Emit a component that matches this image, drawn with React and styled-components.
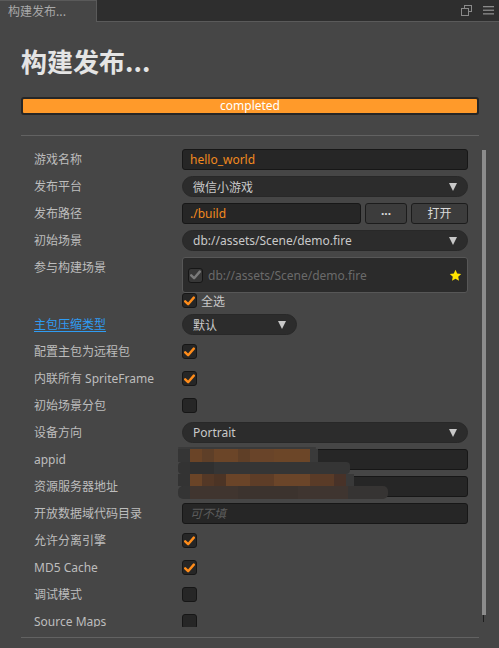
import React from "react";
import styled, { createGlobalStyle } from "styled-components";

const Global = createGlobalStyle`
  html, body { margin: 0; padding: 0; background: #464646; }
  body { font-family: "Noto Sans", "Noto Sans CJK SC", sans-serif; }
  * { box-sizing: border-box; }
`;

const Frame = styled.div`
  width: 499px;
  height: 648px;
  overflow: hidden;
  background: #464646;
  display: flex;
  flex-direction: column;
`;

const TabBar = styled.div`
  height: 22px;
  flex: none;
  display: flex;
  align-items: stretch;
  background: #2e2e2e;
`;

const Tab = styled.div`
  width: 97px;
  background: #464646;
  border-top: 1px solid #5a5a5a;
  border-right: 1px solid #5a5a5a;
  color: #a9a9a9;
  font-size: 12px;
  line-height: 20px;
  padding-left: 8px;
  font-family: "Noto Sans CJK SC", sans-serif;
`;

const TabFill = styled.div`
  flex: 1;
  border-bottom: 1px solid #5a5a5a;
  display: flex;
  justify-content: flex-end;
  align-items: center;
  gap: 11px;
  padding-right: 5px;
  padding-bottom: 1px;
`;

const Panel = styled.div`
  flex: 1;
  padding: 0 20px 0 21px;
  display: flex;
  flex-direction: column;
`;

const Title = styled.h1`
  margin: 22px 0 0;
  font-size: 26px;
  line-height: 34px;
  font-weight: 700;
  color: #e4e4e4;
  font-family: "Noto Sans CJK SC", sans-serif;
  letter-spacing: 0;
`;

const Progress = styled.div`
  margin-top: 19px;
  height: 18px;
  border: 2px solid #262626;
  border-radius: 3px;
  background: #ff9a2a;
  color: #ffffff;
  font-size: 12px;
  line-height: 13px;
  text-align: center;
`;

const Divider = styled.div`
  height: 1px;
  background: #626262;
  margin-top: ${(p) => p.$top}px;
`;

const ScrollRegion = styled.div`
  margin-top: 9px;
  height: 482px;
  margin-right: -7px;
  display: flex;
  overflow: hidden;
`;

const Form = styled.div`
  position: relative;
  flex: 1;
  padding: 4px 11px 0 13px;
  display: flex;
  flex-direction: column;
`;

const Track = styled.div`
  width: 4px;
  margin-left: 3px;
  padding-top: 5px;
  display: flex;
  flex-direction: column;
`;

const Thumb = styled.div`
  height: 465px;
  background: #8c8c8c;
`;

const ThumbEnd = styled.div`
  height: 7px;
  width: 1px;
  margin-left: 1px;
  background: #1e1e1e;
`;

const Row = styled.div`
  display: flex;
  align-items: flex-start;
  margin-bottom: ${(p) => (p.$gap !== undefined ? p.$gap : 6)}px;
`;

const Label = styled.div`
  width: 148px;
  flex: none;
  font-size: 12px;
  line-height: 21px;
  color: ${(p) => (p.$link ? "#2f9cf3" : "#bdbdbd")};
  text-decoration: ${(p) => (p.$link ? "underline" : "none")};
  text-underline-offset: 2px;
  white-space: nowrap;
`;

const Control = styled.div`
  flex: 1;
  display: flex;
  align-items: center;
  gap: 4px;
  min-height: 21px;
`;

const Input = styled.div`
  height: 21px;
  width: ${(p) => (p.$w ? `${p.$w}px` : "100%")};
  flex: ${(p) => (p.$w ? "none" : "1")};
  background: #262626;
  border: 1px solid #171717;
  border-radius: 3px;
  padding: 0 7px;
  font-size: 12px;
  line-height: 19px;
  color: #f28a20;
  font-style: ${(p) => (p.$placeholder ? "italic" : "normal")};
  ${(p) => p.$placeholder && "color: #5c5c5c;"}
`;

const Select = styled.div`
  height: 21px;
  width: ${(p) => (p.$w ? `${p.$w}px` : "100%")};
  background: #2c2c2c;
  border: 1px solid #282828;
  border-radius: 11px;
  padding: 0 10px 0 10px;
  display: flex;
  align-items: center;
  justify-content: space-between;
  font-size: 12px;
  color: #c9c9c9;
`;

const Arrow = styled.span`
  width: 0;
  height: 0;
  border-left: 4.5px solid transparent;
  border-right: 4.5px solid transparent;
  border-top: 8px solid #c8c8c8;
  margin-top: 1px;
`;

const Button = styled.div`
  height: 21px;
  width: ${(p) => p.$w}px;
  flex: none;
  background: #3c3c3c;
  border: 1px solid #1c1c1c;
  border-radius: 3px;
  color: #dadada;
  font-size: 12px;
  line-height: 19px;
  text-align: center;
  font-weight: ${(p) => (p.$bold ? 700 : 400)};
`;

const SceneBox = styled.div`
  flex: 1;
  height: 36px;
  background: #2b2b2b;
  border: 1px solid #575757;
  border-radius: 3px;
  display: flex;
  align-items: center;
  padding: 0 5px 0 5px;
  gap: 5px;
`;

const SceneText = styled.span`
  flex: 1;
  font-size: 12px;
  color: #6a6a6a;
`;

const Box = styled.div`
  width: 15px;
  height: 15px;
  flex: none;
  border-radius: 3px;
  background: ${(p) => (p.$disabled ? "#373737" : "#262626")};
  border: 1px solid #161616;
  display: flex;
  align-items: center;
  justify-content: center;
  margin-top: ${(p) => (p.$flat ? 0 : 3)}px;
  margin-bottom: ${(p) => (p.$flat ? 0 : 3)}px;
`;

const SelectAll = styled.div`
  display: flex;
  align-items: center;
  gap: 4px;
  padding-left: 148px;
  height: 15px;
  margin-bottom: 6px;
  font-size: 12px;
  color: #c9c9c9;
`;

const Mosaic = styled.div`
  position: absolute;
  left: 157px;
  top: 302px;
  width: 212px;
  height: 55px;
  pointer-events: none;
  filter: blur(0.4px);
`;

const Strip = styled.div`
  height: ${(p) => p.$h}px;
  width: ${(p) => p.$w}px;
  border-radius: ${(p) => p.$r || 0}px;
  background: ${(p) => p.$bg};
`;

function Check({ color = "#ff8c1a" }) {
  return (
    <svg width="11" height="10" viewBox="0 0 11 10">
      <path d="M1.2 5.3 L4.1 8.2 L9.8 1.6" fill="none" stroke={color} strokeWidth="2.4" strokeLinecap="round" strokeLinejoin="round" />
    </svg>
  );
}

function CheckBox({ on, disabled, flat }) {
  return (
    <Box $disabled={disabled} $flat={flat}>
      {on && <Check color={disabled ? "#7a7a7a" : "#ff8c1a"} />}
    </Box>
  );
}

function Star() {
  return (
    <svg width="13" height="13" viewBox="0 0 24 24">
      <path d="M12 1.5 L15.1 8.3 L22.5 9.1 L17 14.1 L18.5 21.5 L12 17.8 L5.5 21.5 L7 14.1 L1.5 9.1 L8.9 8.3 Z" fill="#ffe500" />
    </svg>
  );
}

function RestoreIcon() {
  return (
    <svg width="11" height="11" viewBox="0 0 11 11">
      <rect x="3.5" y="0.5" width="7" height="6" fill="none" stroke="#8a8a8a" />
      <rect x="0.5" y="3.5" width="7" height="7" fill="#2e2e2e" stroke="#8a8a8a" />
    </svg>
  );
}

function MenuIcon() {
  return (
    <svg width="11" height="9" viewBox="0 0 11 9">
      <rect x="0" y="0" width="11" height="1.3" fill="#8a8a8a" />
      <rect x="0" y="3.6" width="11" height="1.3" fill="#8a8a8a" />
      <rect x="0" y="7.2" width="11" height="1.3" fill="#8a8a8a" />
    </svg>
  );
}

const brownRow1 =
  "linear-gradient(90deg, #353535 0 12px, #6a4427 12px 24px, #5e3f28 24px 36px, #6b4528 36px 60px, #5f3f27 60px 72px, #694429 72px 96px, #6c4628 96px 132px, #3a3a3a 132px 140px)";
const brownRow3 =
  "linear-gradient(90deg, #333 0 12px, #6a4427 12px 24px, #543826 24px 36px, #4c3425 36px 48px, #6a4428 48px 72px, #5e3d27 72px 96px, #6b4529 96px 132px, #5a3b27 132px 156px, #483228 156px 168px, #393939 168px 176px)";
const brownRow4 =
  "linear-gradient(90deg, #343434 0 12px, #40352f 12px 60px, #3c332e 60px 120px, #3f3530 120px 170px, #363433 170px 210px)";

export default function App() {
  return (
    <Frame>
      <Global />
      <TabBar>
        <Tab>构建发布...</Tab>
        <TabFill>
          <RestoreIcon />
          <MenuIcon />
        </TabFill>
      </TabBar>
      <Panel>
        <Title>构建发布...</Title>
        <Progress>completed</Progress>
        <Divider $top={20} />
        <ScrollRegion>
          <Form>
            <Row>
              <Label>游戏名称</Label>
              <Control>
                <Input>hello_world</Input>
              </Control>
            </Row>
            <Row>
              <Label>发布平台</Label>
              <Control>
                <Select>
                  <span>微信小游戏</span>
                  <Arrow />
                </Select>
              </Control>
            </Row>
            <Row>
              <Label>发布路径</Label>
              <Control>
                <Input $w={179}>./build</Input>
                <Button $w={42} $bold>···</Button>
                <Button $w={57}>打开</Button>
              </Control>
            </Row>
            <Row>
              <Label>初始场景</Label>
              <Control>
                <Select>
                  <span>db://assets/Scene/demo.fire</span>
                  <Arrow />
                </Select>
              </Control>
            </Row>
            <Row $gap={0}>
              <Label>参与构建场景</Label>
              <Control>
                <SceneBox>
                  <CheckBox on disabled flat />
                  <SceneText>db://assets/Scene/demo.fire</SceneText>
                  <Star />
                </SceneBox>
              </Control>
            </Row>
            <SelectAll>
              <CheckBox on flat />
              <span>全选</span>
            </SelectAll>
            <Row>
              <Label $link>主包压缩类型</Label>
              <Control>
                <Select $w={115}>
                  <span>默认</span>
                  <Arrow />
                </Select>
              </Control>
            </Row>
            <Row>
              <Label>配置主包为远程包</Label>
              <Control>
                <CheckBox on />
              </Control>
            </Row>
            <Row>
              <Label>内联所有 SpriteFrame</Label>
              <Control>
                <CheckBox on />
              </Control>
            </Row>
            <Row>
              <Label>初始场景分包</Label>
              <Control>
                <CheckBox />
              </Control>
            </Row>
            <Row>
              <Label>设备方向</Label>
              <Control>
                <Select>
                  <span>Portrait</span>
                  <Arrow />
                </Select>
              </Control>
            </Row>
            <Row>
              <Label>appid</Label>
              <Control>
                <Input />
              </Control>
            </Row>
            <Row>
              <Label>资源服务器地址</Label>
              <Control>
                <Input />
              </Control>
            </Row>
            <Row>
              <Label>开放数据域代码目录</Label>
              <Control>
                <Input $placeholder>可不填</Input>
              </Control>
            </Row>
            <Row>
              <Label>允许分离引擎</Label>
              <Control>
                <CheckBox on />
              </Control>
            </Row>
            <Row>
              <Label>MD5 Cache</Label>
              <Control>
                <CheckBox on />
              </Control>
            </Row>
            <Row>
              <Label>调试模式</Label>
              <Control>
                <CheckBox />
              </Control>
            </Row>
            <Row>
              <Label>Source Maps</Label>
              <Control>
                <CheckBox />
              </Control>
            </Row>
            <Mosaic>
              <Strip $h={2} $w={138} $r={3} $bg="#3a3a3a" />
              <Strip $h={13} $w={140} $bg={brownRow1} />
              <Strip $h={12} $w={172} $r={4} $bg="linear-gradient(90deg, #333 0 12px, #303030 12px 36px, #353535 36px 172px)" />
              <Strip $h={12} $w={176} $bg={brownRow3} />
              <Strip $h={13} $w={210} $r={5} $bg={brownRow4} />
            </Mosaic>
          </Form>
          <Track>
            <Thumb />
            <ThumbEnd />
          </Track>
        </ScrollRegion>
        <Divider $top={10} />
      </Panel>
    </Frame>
  );
}
